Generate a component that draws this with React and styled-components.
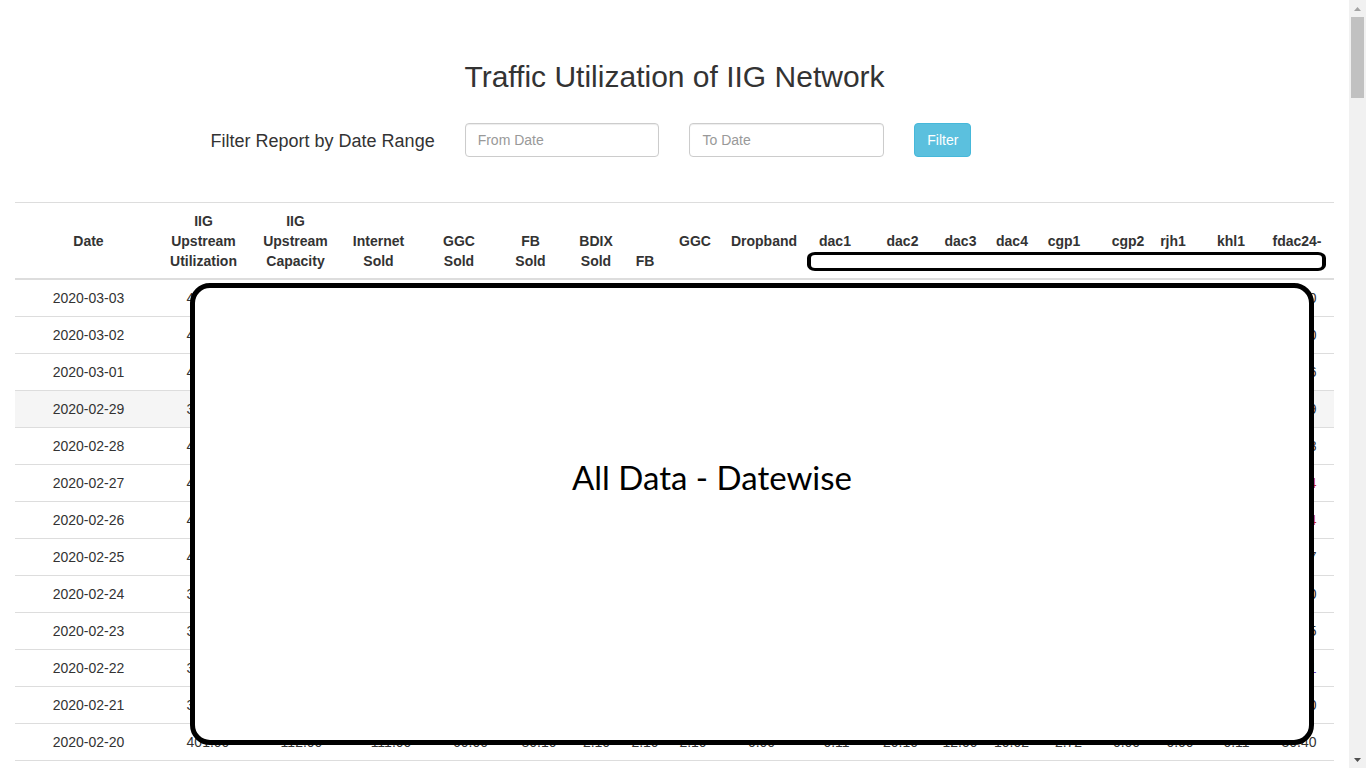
import React from 'react';
import styled, { createGlobalStyle } from 'styled-components';

const GlobalStyle = createGlobalStyle`
  html, body {
    margin: 0;
    padding: 0;
    height: 100%;
    overflow: hidden;
  }
  body {
    font-family: "Liberation Sans", Arial, Helvetica, sans-serif;
    font-size: 14px;
    color: #333;
    background: #fff;
  }
  * {
    box-sizing: border-box;
  }
`;

// column widths + where the header / cell text is centred (page x)
const columns = [
  { head: ['Date'], va: 'middle', w: 135, hc: 88.5, dc: 88.5 },
  { head: ['IIG', 'Upstream', 'Utilization'], va: 'bottom', w: 100, hc: 203.5, dc: 208 },
  { head: ['IIG', 'Upstream', 'Capacity'], va: 'bottom', w: 93, hc: 295.5, dc: 301.5 },
  { head: ['Internet', 'Sold'], va: 'bottom', w: 77, hc: 378.5, dc: 391 },
  { head: ['GGC', 'Sold'], va: 'bottom', w: 80, hc: 459, dc: 470.5 },
  { head: ['FB', 'Sold'], va: 'bottom', w: 65, hc: 530.5, dc: 539 },
  { head: ['BDIX', 'Sold'], va: 'bottom', w: 59, hc: 596, dc: 596.5 },
  { head: ['FB'], va: 'bottom', w: 42, hc: 645, dc: 645 },
  { head: ['GGC'], va: 'middle', w: 58, hc: 695, dc: 693 },
  { head: ['Dropband'], va: 'middle', w: 76, hc: 764, dc: 761.5 },
  { head: ['dac1'], va: 'middle', w: 70, hc: 835, dc: 836.5 },
  { head: ['dac2'], va: 'middle', w: 62, hc: 902.5, dc: 900.5 },
  { head: ['dac3'], va: 'middle', w: 56, hc: 960.5, dc: 960 },
  { head: ['dac4'], va: 'middle', w: 50, hc: 1012, dc: 1011.5 },
  { head: ['cgp1'], va: 'middle', w: 59, hc: 1064, dc: 1068.5 },
  { head: ['cgp2'], va: 'middle', w: 56, hc: 1128, dc: 1126.5 },
  { head: ['rjh1'], va: 'middle', w: 52, hc: 1173, dc: 1180 },
  { head: ['khl1'], va: 'middle', w: 57, hc: 1231, dc: 1236.5 },
  { head: ['fdac24-'], va: 'middle', w: 72, hc: 1297, dc: 1299 },
];

let x = 15;
columns.forEach((c) => {
  c.mid = x + c.w / 2;
  x += c.w;
});

const pads = (mid, center) => {
  const s = center - mid;
  return { l: s > 0 ? s * 2 : 0, r: s < 0 ? -s * 2 : 0 };
};

const rows = [
  { date: '2020-03-03', first: '452.18', last: '31.20' },
  { date: '2020-03-02', first: '448.60', last: '30.80' },
  { date: '2020-03-01', first: '431.25', last: '29.76' },
  { date: '2020-02-29', first: '398.75', last: '31.09', hover: true },
  { date: '2020-02-28', first: '420.33', last: '30.58' },
  { date: '2020-02-27', first: '437.90', last: '34.14', lastColor: '#c0282d' },
  { date: '2020-02-26', first: '445.12', last: '33.94', lastColor: '#c0282d' },
  { date: '2020-02-25', first: '402.66', last: '29.87' },
  { date: '2020-02-24', first: '389.40', last: '30.20' },
  { date: '2020-02-23', first: '376.80', last: '29.45' },
  { date: '2020-02-22', first: '391.05', last: '28.91', lastColor: '#6f42c1' },
  { date: '2020-02-21', first: '398.22', last: '30.10' },
  {
    date: '2020-02-20',
    vals: ['401.00', '112.00', '111.00', '60.00', '80.10', '2.10', '2.10', '2.10', '0.00', '0.11', '20.10', '12.00', '10.02', '2.72', '0.00', '0.00', '0.11', '30.40'],
  },
  { date: '2020-02-19', first: '396.41', last: '29.33' },
  { date: '2020-02-18', first: '405.72', last: '30.02' },
];

const middle = ['480.00', '452.00', '61.20', '80.40', '2.10', '2.10', '2.10', '0.00', '0.11', '20.40', '12.30', '10.12', '2.70', '0.00', '0.00', '0.11'];

const App = () => (
  <>
    <GlobalStyle />
    <Page>
      <Main>
        <Container>
          <Title>Traffic Utilization of IIG Network</Title>
          <FilterRow>
            <LabelCol>Filter Report by Date Range</LabelCol>
            <InputCol>
              <Input placeholder="From Date" />
            </InputCol>
            <InputCol>
              <Input placeholder="To Date" />
            </InputCol>
            <ButtonCol>
              <FilterButton>Filter</FilterButton>
            </ButtonCol>
          </FilterRow>

          <Table>
            <colgroup>
              {columns.map((c, i) => (
                <col key={i} style={{ width: c.w }} />
              ))}
            </colgroup>
            <thead>
              <tr>
                {columns.map((c, i) => {
                  const p = pads(c.mid, c.hc);
                  return (
                    <Th key={i} $va={c.va} $pl={p.l} $pr={p.r}>
                      {c.head.map((line, j) => (
                        <div key={j}>{line}</div>
                      ))}
                    </Th>
                  );
                })}
              </tr>
            </thead>
            <tbody>
              {rows.map((r) => {
                const vals = r.vals || [r.first, ...middle, r.last];
                return (
                  <Tr key={r.date} $hover={r.hover}>
                    {[r.date, ...vals].map((v, i) => {
                      const c = columns[i];
                      const p = pads(c.mid, c.dc);
                      const color = i === vals.length && r.lastColor ? r.lastColor : undefined;
                      return (
                        <Td key={i} $pl={p.l} $pr={p.r} $color={color}>
                          {v}
                        </Td>
                      );
                    })}
                  </Tr>
                );
              })}
            </tbody>
          </Table>
        </Container>

        <HeaderMark />
        <Callout>
          <CalloutText>All Data - Datewise</CalloutText>
        </Callout>
      </Main>

      <ScrollBar>
        <ScrollArrow>
          <svg width="7" height="4" viewBox="0 0 7 4">
            <path d="M0 4 L3.5 0 L7 4 Z" fill="#a3a3a3" />
          </svg>
        </ScrollArrow>
        <Track>
          <Thumb />
        </Track>
        <ScrollArrow>
          <svg width="7" height="4" viewBox="0 0 7 4">
            <path d="M0 0 L3.5 4 L7 0 Z" fill="#505050" />
          </svg>
        </ScrollArrow>
      </ScrollBar>
    </Page>
  </>
);

export default App;

const Page = styled.div`
  display: flex;
  width: 100vw;
  height: 100vh;
  overflow: hidden;
`;

const Main = styled.div`
  position: relative;
  flex: 1;
  height: 100%;
  overflow: hidden;
`;

const Container = styled.div`
  padding: 60px 15px 0;
`;

const Title = styled.h1`
  margin: 0;
  font-size: 30px;
  line-height: 33px;
  font-weight: 400;
  color: #333;
  text-align: center;
`;

const FilterRow = styled.div`
  display: flex;
  align-items: center;
  margin: 30px -15px 0;
  height: 34px;
`;

const LabelCol = styled.div`
  width: 33.3333%;
  padding: 0 15px;
  text-align: right;
  font-size: 18px;
  line-height: 34px;
  margin-top: 2px;
  color: #333;
`;

const InputCol = styled.div`
  width: 16.6667%;
  padding: 0 15px;
`;

const ButtonCol = styled.div`
  padding: 0 15px;
`;

const Input = styled.input`
  display: block;
  width: 100%;
  height: 34px;
  padding: 6px 12px;
  font-family: inherit;
  font-size: 14px;
  color: #555;
  background: #fff;
  border: 1px solid #ccc;
  border-radius: 4px;
  box-shadow: inset 0 1px 1px rgba(0, 0, 0, 0.075);
  outline: none;

  &::placeholder {
    color: #999;
  }
`;

const FilterButton = styled.button`
  height: 34px;
  padding: 6px 12px;
  font-family: inherit;
  font-size: 14px;
  line-height: 20px;
  color: #fff;
  background: #5bc0de;
  border: 1px solid #46b8da;
  border-radius: 4px;
`;

const Table = styled.table`
  width: 100%;
  margin-top: 45px;
  table-layout: fixed;
  border-collapse: collapse;
  border-top: 1px solid #ddd;
`;

const Th = styled.th`
  padding: 8px ${(p) => p.$pr}px 7px ${(p) => p.$pl}px;
  vertical-align: ${(p) => p.$va};
  text-align: center;
  font-weight: 700;
  line-height: 20px;
  white-space: nowrap;
  color: #333;
  border-bottom: 2px solid #ddd;
`;

const Tr = styled.tr`
  background: ${(p) => (p.$hover ? '#f5f5f5' : '#fff')};
`;

const Td = styled.td`
  padding: 8px ${(p) => p.$pr}px 8px ${(p) => p.$pl}px;
  text-align: center;
  line-height: 20px;
  white-space: nowrap;
  color: ${(p) => p.$color || '#333'};
  border-bottom: 1px solid #ddd;
`;

const HeaderMark = styled.div`
  position: absolute;
  left: 807px;
  top: 252px;
  width: 519px;
  height: 19px;
  background: #fff;
  border: 3px solid #000;
  border-width: 3px 4px;
  border-radius: 8px / 6px;
`;

const Callout = styled.div`
  position: absolute;
  left: 190px;
  top: 283px;
  width: 1124px;
  height: 462px;
  padding: 169px 0 0 377px;
  background: #fff;
  border: 5px solid #000;
  border-radius: 20px;
`;

const CalloutText = styled.div`
  font-family: Lato, "Open Sans", sans-serif;
  font-size: 33px;
  line-height: 40px;
  color: #000;
`;

const ScrollBar = styled.div`
  display: flex;
  flex-direction: column;
  width: 17px;
  height: 100%;
  background: #f1f1f1;
`;

const ScrollArrow = styled.div`
  display: flex;
  align-items: center;
  justify-content: center;
  height: 17px;
`;

const Track = styled.div`
  flex: 1;
  padding: 0 2px;
`;

const Thumb = styled.div`
  height: 81px;
  background: #c1c1c1;
`;
